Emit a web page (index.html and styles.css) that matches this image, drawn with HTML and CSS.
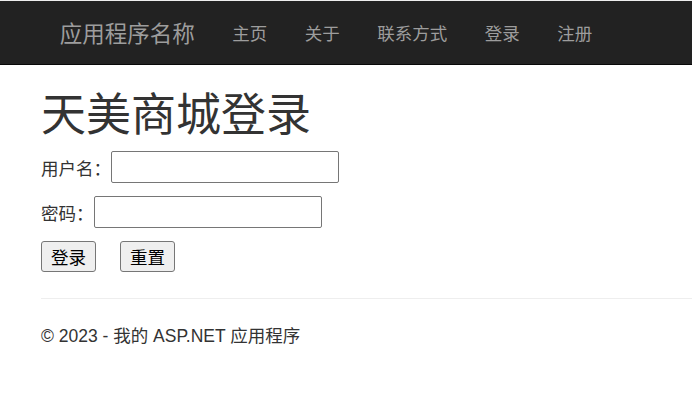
FILE: index.html
```html
<!DOCTYPE html>
<html lang="zh-CN">
<head>
<meta charset="utf-8">
<title>天美商城登录</title>
<link rel="stylesheet" href="styles.css">
</head>
<body>
<div class="topline"></div>
<nav class="navbar">
  <a class="brand" href="#">应用程序名称</a>
  <ul class="nav">
    <li><a href="#">主页</a></li>
    <li><a href="#">关于</a></li>
    <li><a href="#">联系方式</a></li>
    <li><a href="#">登录</a></li>
    <li><a href="#">注册</a></li>
  </ul>
</nav>
<main class="content">
  <h1 class="title">天美商城登录</h1>
  <form class="login">
    <div class="row"><label class="lbl">用户名：</label><input class="field" type="text"></div>
    <div class="row"><label class="lbl">密码：</label><input class="field" type="password"></div>
    <div class="actions">
      <button class="btn" type="button">登录</button>
      <button class="btn" type="reset">重置</button>
    </div>
  </form>
  <hr class="rule">
  <footer class="footer">
    <p>© 2023 - 我的 ASP.NET 应用程序</p>
  </footer>
</main>
</body>
</html>
```
FILE: styles.css
```css
html, body {
  margin: 0;
  padding: 0;
  background: #fff;
}
body {
  font-family: "Liberation Sans", "Noto Sans CJK SC", sans-serif;
  font-size: 17.5px;
  color: #333;
  overflow: hidden;
}
.topline {
  height: 1px;
  background: #eeeeee;
}
.navbar {
  height: 63px;
  background: #222222;
  border-bottom: 1px solid #080808;
  display: flex;
  align-items: stretch;
  padding-left: 41px;
  font-family: "Noto Sans CJK SC", sans-serif;
}
.brand {
  color: #9d9d9d;
  text-decoration: none;
  font-size: 22.5px;
  line-height: 63px;
  padding: 0 18.75px;
}
.nav {
  list-style: none;
  margin: 0;
  padding: 0;
  display: flex;
}
.nav a {
  display: block;
  color: #9d9d9d;
  text-decoration: none;
  font-size: 17.5px;
  line-height: 63px;
  padding: 0 18.75px;
}
.content {
  padding-left: 41px;
}
.title {
  font-family: "Noto Sans CJK SC", sans-serif;
  font-size: 45px;
  font-weight: 400;
  line-height: 49px;
  margin: 22px 0 15px 0;
  color: #333;
}
.login {
  font-family: "Noto Sans CJK SC", sans-serif;
}
.row {
  display: flex;
  align-items: center;
  height: 32px;
  margin-bottom: 13px;
}
.lbl {
  font-size: 17.5px;
  color: #333;
}
.field {
  width: 228px;
  height: 32px;
  box-sizing: border-box;
  border: 1px solid #767676;
  border-radius: 2px;
  padding: 2px 4px;
  font-size: 17.5px;
  margin: 0;
  background: #fff;
}
.actions {
  display: flex;
  gap: 24px;
  margin-top: 1px;
}
.btn {
  width: 55px;
  height: 31px;
  box-sizing: border-box;
  background: #efefef;
  border: 1px solid #767676;
  border-radius: 3px;
  font-family: "Noto Sans CJK SC", sans-serif;
  font-size: 17.5px;
  color: #000;
  padding: 0;
  line-height: 1;
}
.rule {
  border: 0;
  border-top: 1px solid #eeeeee;
  margin: 26px 0 0 0;
  height: 0;
}
.footer p {
  margin: 25px 0 0 0;
  font-size: 17.5px;
  line-height: 25px;
  color: #333;
}
```
